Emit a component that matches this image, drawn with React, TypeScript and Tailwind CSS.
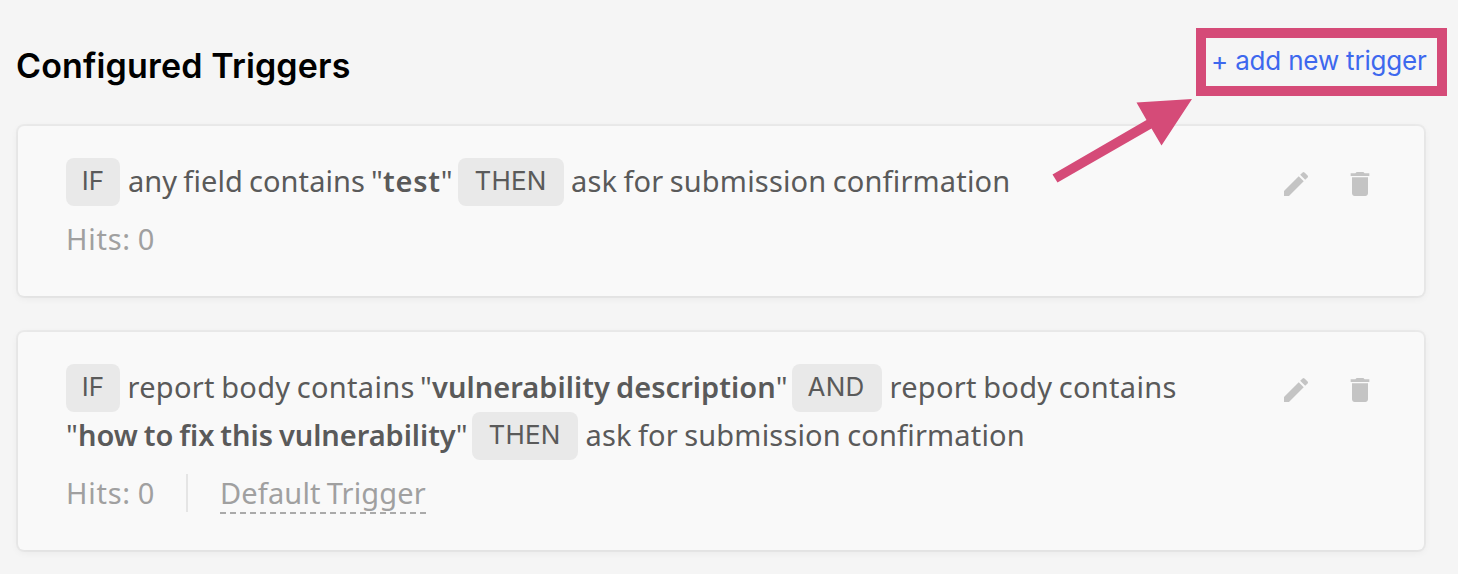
import type { ReactNode } from "react";

function Badge({ children, className }: { children: ReactNode; className: string }) {
  return (
    <span
      className={`flex h-12 shrink-0 justify-center rounded-lg bg-[#e9e9e9] font-['Inter',sans-serif] text-[26px] leading-[46px] ${className}`}
    >
      {children}
    </span>
  );
}

function Text({ children, className }: { children: ReactNode; className: string }) {
  return <span className={`shrink-0 whitespace-nowrap leading-[46px] ${className}`}>{children}</span>;
}

function Actions() {
  return (
    <div className="flex gap-8 pt-2.5 text-[#c4c4c4]">
      <button aria-label="Edit trigger" className="size-8">
        <svg viewBox="0 0 24 24" className="size-8" fill="currentColor">
          <path d="M3 17.25V21h3.75L17.81 9.94l-3.75-3.75L3 17.25zM20.71 7.04a1 1 0 0 0 0-1.41l-2.34-2.34a1 1 0 0 0-1.41 0l-1.83 1.83 3.75 3.75 1.83-1.83z" />
        </svg>
      </button>
      <button aria-label="Delete trigger" className="size-8">
        <svg viewBox="0 0 24 24" className="size-8" fill="currentColor">
          <path d="M6 19c0 1.1.9 2 2 2h8c1.1 0 2-.9 2-2V7H6v12zM19 4h-3.500l-1-1h-5l-1 1H5v2h14V4z" />
        </svg>
      </button>
    </div>
  );
}

function Card({ children, className }: { children: ReactNode; className: string }) {
  return (
    <section
      className={`flex justify-between rounded-md bg-[#f9f9f9] pr-12 pl-12 pt-8 text-[29px] leading-[48px] tracking-[0.18px] [word-spacing:-1.5px] text-[#5a5a5a] shadow-[0_0_0_2px_rgba(0,0,0,0.035),0_2px_8px_rgba(0,0,0,0.06)] ${className}`}
    >
      <div>{children}</div>
      <Actions />
    </section>
  );
}

export default function App() {
  return (
    <main className="relative h-[574px] overflow-hidden bg-[#f5f5f5] pr-[34px] pl-[18px] font-['Noto_Sans',sans-serif]">
      <header className="flex h-[126px] justify-between font-['Inter',sans-serif]">
        <h1 className="-ml-0.5 pt-[41px] text-[34px] leading-[50px] font-semibold tracking-[0.15px] text-black">
          Configured Triggers
        </h1>
        <a
          href="#"
          className="mt-7 -mr-[23px] flex h-[68px] w-[251px] border-10 border-[#d54b78] pl-[5px] text-[26px] leading-[46px] tracking-[-0.18px] whitespace-nowrap text-[#3d68ee]"
        >
          + add new trigger
        </a>
      </header>

      <Card className="h-[170px]">
        <div className="flex">
          <Badge className="w-[54px] tracking-normal">IF</Badge>
          <Text className="w-[251px] pl-2 tracking-[0.08px]">any field contains</Text>
          <Text className="w-[87px]">
            "<b className="font-semibold tracking-[0.7px]">test</b>"
          </Text>
          <Badge className="w-[106px] pr-px tracking-[0.2px]">THEN</Badge>
          <Text className="pl-[7px]">ask for submission confirmation</Text>
        </div>
        <p className="mt-[9px] tracking-[0.75px] text-[#a0a0a0]">Hits: 0</p>
      </Card>

      <Card className="mt-9 h-[218px]">
        <div className="flex">
          <Badge className="w-[54px] tracking-normal">IF</Badge>
          <Text className="w-[300px] pl-[7.5px] tracking-[0.3px]">report body contains</Text>
          <Text className="w-[372px]">
            "<b className="font-semibold tracking-[0.04px]">vulnerability description</b>"
          </Text>
          <Badge className="w-[90px] pr-0.5 tracking-[0.2px]">AND</Badge>
          <Text className="pl-[7.5px] tracking-[0.3px]">report body contains</Text>
        </div>
        <div className="flex">
          <Text className="w-[406px]">
            "<b className="font-semibold tracking-[-0.05px]">how to fix this vulnerability</b>"
          </Text>
          <Badge className="w-[106px] pr-px tracking-[0.2px]">THEN</Badge>
          <Text className="pl-[7.5px]">ask for submission confirmation</Text>
        </div>
        <div className="mt-3.5 flex h-10 text-[#a0a0a0]">
          <span className="h-[38px] w-[122px] border-r-2 border-[#e5e5e5] leading-[38px] tracking-[0.75px]">Hits: 0</span>
          <span className="ml-8 border-b-2 border-dashed border-[#aaaaaa] leading-[38px] tracking-[0.14px]">Default Trigger</span>
        </div>
      </Card>

      <svg
        viewBox="0 0 142 90"
        className="pointer-events-none absolute top-[96px] left-[1050px] h-[90px] w-[142px]"
        fill="#d54b78"
        aria-hidden="true"
      >
        <path d="M142 3 86.500 6.500 96.500 24 2.500 78.500 7.500 86.500 101.500 32.500 111.500 49.500Z" />
      </svg>
    </main>
  );
}
